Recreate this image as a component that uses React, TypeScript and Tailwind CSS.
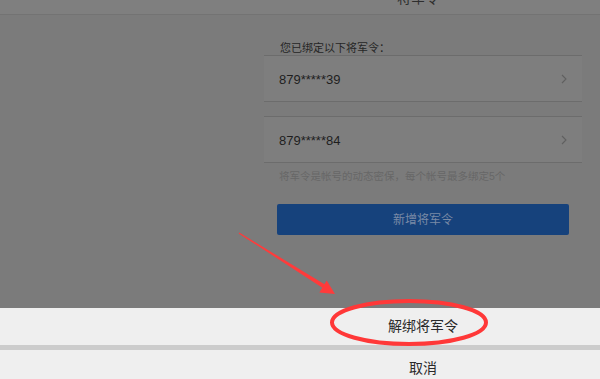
import React from "react";

const accounts = ["879*****39", "879*****84"];

const Chevron = () => (
  <svg width="6" height="10" viewBox="0 0 6 10" className="shrink-0">
    <path d="M1 1 L5 5 L1 9" fill="none" stroke="#606060" strokeWidth="1.1" />
  </svg>
);

const Annotation = () => (
  <svg className="absolute inset-0 pointer-events-none" width="600" height="379" viewBox="0 0 600 379">
    <polygon points="238.7,233.4 239.3,232.6 326.1,285.3 323.9,288.7" fill="#ff3b3b" />
    <polygon points="335,294 319.3,292.4 326.7,280.6" fill="#ff3b3b" />
    <ellipse cx="409" cy="322.5" rx="77" ry="21.5" fill="none" stroke="#ff3838" strokeWidth="4" />
  </svg>
);

const App = () => {
  return (
    <div className="relative w-[600px] h-[379px] overflow-hidden bg-[#7b7b7b] flex flex-col font-['Liberation_Sans','Noto_Sans_CJK_SC',sans-serif]">
      <div className="h-[15px] shrink-0 bg-[#7f7f7f] border-b border-[#737373] flex justify-center overflow-hidden pl-[254px] pr-[18px]">
        <span className="text-[14px] leading-[14px] text-[#2e2e2e] -mt-[9px]">将军令</span>
      </div>

      <div className="flex-1 flex">
        <div className="w-[264px] shrink-0"></div>
        <div className="w-[318px] flex flex-col pt-[26px]">
          <div className="text-[11px] leading-[14px] text-[#262626] pl-[16px]">您已绑定以下将军令：</div>
          {accounts.map((a, i) => (
            <div
              key={a}
              className={`h-[47px] bg-[#7e7e7e] border-y border-[#6c6c6c] flex items-center justify-between pl-[15px] pr-[15px] ${i > 0 ? "mt-[14px]" : ""}`}
            >
              <span className="text-[13px] text-[#1e1e1e] mt-[3px]">{a}</span>
              <Chevron />
            </div>
          ))}
          <div className="mt-[7px] pl-[15px] text-[10.5px] leading-[13px] text-[#676767]">
            将军令是帐号的动态密保，每个帐号最多绑定5个
          </div>
          <button className="mt-[21px] mx-[13px] h-[31px] bg-[#16427c] rounded-[2px] text-[12px] text-[#7a8aa6]">
            新增将军令
          </button>
        </div>
      </div>

      <div className="shrink-0 bg-[#efefef] h-[71px] flex flex-col">
        <div className="h-[37px] shrink-0 flex items-center pl-[264px] w-[582px]">
          <span className="flex-1 text-center text-[14px] text-[#2a2a2a]">解绑将军令</span>
        </div>
        <div className="h-[5px] shrink-0 bg-[#cccccc]"></div>
        <div className="h-[37px] shrink-0 flex items-center pl-[264px] w-[582px]">
          <span className="flex-1 text-center text-[14px] text-[#2a2a2a]">取消</span>
        </div>
      </div>

      <Annotation />
    </div>
  );
};

export default App;
